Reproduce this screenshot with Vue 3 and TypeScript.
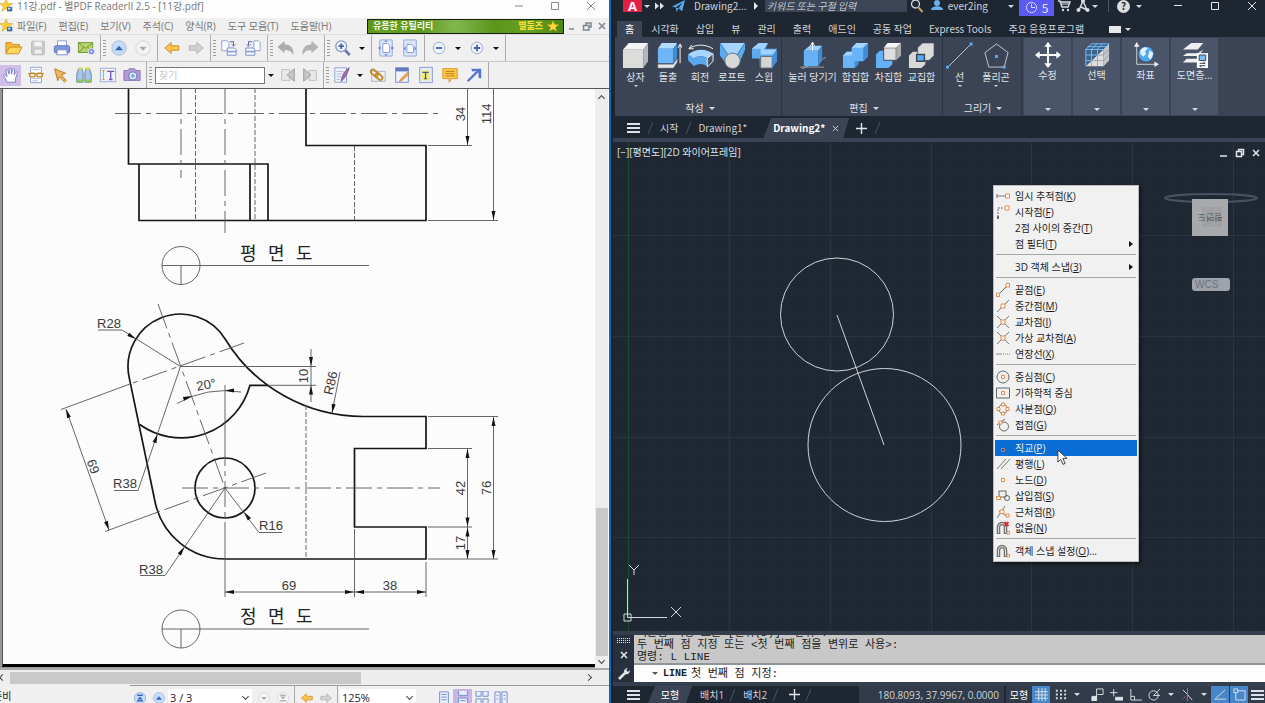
<script setup lang="ts">
interface Tool { kind: 'btn' | 'sep' | 'grip' | 'caret' | 'find'; icon?: string; label?: string; on?: boolean; narrow?: boolean }
interface Cmd { label: string; icon: string; more?: boolean }
interface SnapItem { text?: string; key?: string; tail?: string; icon?: string; sub?: boolean; active?: boolean; sep?: boolean }

const b = (icon: string, label: string, extra: Partial<Tool> = {}): Tool => ({ kind: 'btn', icon, label, ...extra })
const sep: Tool = { kind: 'sep' }
const grip: Tool = { kind: 'grip' }
const caret: Tool = { kind: 'caret' }

const pdfMenus = ['파일(F)', '편집(E)', '보기(V)', '주석(C)', '양식(R)', '도구 모음(T)', '도움말(H)']

const toolRow1: Tool[] = [
  b('folder', '열기'), b('save', '저장'), b('print', '인쇄'), b('mail', '메일'), sep, grip,
  b('up', '이전'), b('down', '다음'), sep, b('back', '뒤로'), b('forward', '앞으로'), sep, grip,
  b('rotl', '왼쪽 회전'), b('rotr', '오른쪽 회전'), sep, grip,
  b('undo', '실행 취소'), b('redo', '다시 실행'), sep, grip,
  b('zoom', '확대'), caret, sep, b('fitpage', '페이지 맞춤'), b('fitwidth', '폭 맞춤'), sep,
  b('minus', '축소'), caret, b('plus', '확대'), caret, sep,
]
const toolRow2: Tool[] = [
  b('hand', '손', { on: true }), b('reader', '읽기'), b('pointer', '선택'), b('binoc', '검색'), b('text', '텍스트'), b('camera', '스냅샷'), sep, grip,
  { kind: 'find' }, caret, b('prev', '이전 찾기', { narrow: true }), b('next', '다음 찾기', { narrow: true }), sep, grip,
  b('pen', '펜'), caret, b('clip', '첨부'), b('note', '노트'), b('textnote', '텍스트 노트'), b('comment', '주석'), b('arrow', '화살표'), sep,
]

const ribbonTabs = ['홈', '시각화', '삽입', '뷰', '관리', '출력', '애드인', '공동 작업', 'Express Tools', '주요 응용프로그램']
const createCmds: Cmd[] = [
  { label: '상자', icon: 'box', more: true }, { label: '돌출', icon: 'extrude' }, { label: '회전', icon: 'revolve' },
  { label: '로프트', icon: 'loft' }, { label: '스윕', icon: 'sweep' },
]
const editCmds: Cmd[] = [
  { label: '눌러 당기기', icon: 'presspull' }, { label: '합집합', icon: 'union' }, { label: '차집합', icon: 'subtract' }, { label: '교집합', icon: 'intersect' },
]
const drawCmds: Cmd[] = [{ label: '선', icon: 'line', more: true }, { label: '폴리곤', icon: 'polygon', more: true }]
const bigPanels: Cmd[] = [
  { label: '수정', icon: 'move' }, { label: '선택', icon: 'select' }, { label: '좌표', icon: 'coord' }, { label: '도면층...', icon: 'layers' },
]
const ribbonPanels = [
  { name: '작성', cls: 'create', cmds: createCmds },
  { name: '편집', cls: 'edit', cmds: editCmds },
  { name: '그리기', cls: 'draw', cmds: drawCmds },
]

const snaps: SnapItem[] = [
  { text: '임시 추적점', key: 'K', icon: 'track' },
  { text: '시작점', key: 'F', icon: 'from' },
  { text: '2점 사이의 중간', key: 'T' },
  { text: '점 필터', key: 'T', sub: true },
  { sep: true },
  { text: '3D 객체 스냅', key: '3', sub: true },
  { sep: true },
  { text: '끝점', key: 'E', icon: 'end' },
  { text: '중간점', key: 'M', icon: 'mid' },
  { text: '교차점', key: 'I', icon: 'cross' },
  { text: '가상 교차점', key: 'A', icon: 'cross' },
  { text: '연장선', key: 'X', icon: 'ext' },
  { sep: true },
  { text: '중심점', key: 'C', icon: 'center' },
  { text: '기하학적 중심', icon: 'geo' },
  { text: '사분점', key: 'Q', icon: 'quad' },
  { text: '접점', key: 'G', icon: 'tan' },
  { sep: true },
  { text: '직교', key: 'P', icon: 'perp', active: true },
  { text: '평행', key: 'L', icon: 'par' },
  { text: '노드', key: 'D', icon: 'node' },
  { text: '삽입점', key: 'S', icon: 'ins' },
  { text: '근처점', key: 'R', icon: 'near' },
  { text: '없음', key: 'N', icon: 'none' },
  { sep: true },
  { text: '객체 스냅 설정', key: 'O', tail: '...', icon: 'magnet' },
]

const majorX = [118, 219, 320, 420, 521, 622]
const majorY = [93, 194, 295, 395]

// Arrowheads of the dimension lines: tip x, tip y, direction in degrees
const heads: [number, number, number][] = [
  [467.5, 145, 90], [493.5, 220, 90], [311, 366, 90], [311, 385.5, -90],
  [66, 409, -109.5], [109, 530, 70.5], [136, 339, 31], [157.5, 434, -71],
  [192, 396, -19], [225, 390.5, 180], [244, 512, -127], [184.5, 547, -55], [332, 413, 101],
  [225, 592, 180], [354, 592, 0], [355, 592, 180], [426, 592, 0],
  [467.5, 449, -90], [467.5, 526.5, 90], [467.5, 527.5, -90], [467.5, 559, 90],
  [493.5, 417, -90], [493.5, 559, 90],
]
</script>

<template>
  <svg class="defs" aria-hidden="true">
    <defs>
      <symbol id="i-folder" viewBox="0 0 20 20"><path d="M1 16V4h6l2 2h7v3" fill="#f3b93a" stroke="#c98a1a" /><path d="M1 16.500 5 9h14l-4 7.500z" fill="#ffd65e" stroke="#c98a1a" /></symbol>
      <symbol id="i-save" viewBox="0 0 20 20"><rect x="3" y="2.500" width="14" height="15" rx="1" fill="#cfcfcf" stroke="#b3b3b3" /><rect x="6" y="3" width="8" height="5" fill="#f4f4f4" /><rect x="5.500" y="11" width="9" height="6" fill="#efefef" stroke="#bbb" /></symbol>
      <symbol id="i-print" viewBox="0 0 20 20"><path d="M5 8V2h10v6" fill="#fff" stroke="#8794c9" /><rect x="1.500" y="7.500" width="17" height="8" rx="2" fill="#7f9ade" stroke="#5069b5" /><path d="M5 12h10l1 5.500H4z" fill="#fff" stroke="#6f84c8" /></symbol>
      <symbol id="i-mail" viewBox="0 0 20 20"><rect x="1.500" y="4" width="16" height="11" fill="#b5d46a" stroke="#6d9433" /><path d="m2 4.500 7.500 6L17 4.500M2 15l5.500-6M17 15l-5-6" fill="none" stroke="#6d9433" /><circle cx="16" cy="14" r="3.500" fill="#6e8ad6" stroke="#eef" /><circle cx="16" cy="14" r="1.200" fill="#eef" /></symbol>
      <symbol id="i-up" viewBox="0 0 20 20"><circle cx="10" cy="10" r="8" fill="#c6ddf8" stroke="#a7b8d6" /><path d="m5.500 12.500 4.500-5 4.500 5z" fill="#3d63bd" /></symbol>
      <symbol id="i-down" viewBox="0 0 20 20"><circle cx="10" cy="10" r="8" fill="#f4f4f4" stroke="#d2d2d2" /><path d="m6 8.500 4 4.500 4-4.500z" fill="#a8a8a8" /></symbol>
      <symbol id="i-first" viewBox="0 0 20 20"><circle cx="10" cy="10" r="8" fill="#c6ddf8" stroke="#8fa4d0" /><path d="M6 5h8v2H6zM6 13h8v2H6z" fill="#3d63bd" /><path d="m6 12 4-4 4 4z" fill="#3d63bd" /></symbol>
      <symbol id="i-last" viewBox="0 0 20 20"><circle cx="10" cy="10" r="8" fill="#f4f4f4" stroke="#d2d2d2" /><path d="M6 5h8v2H6zM6 13h8v2H6z" fill="#b5b5b5" /><path d="m6 8 4 4 4-4z" fill="#b5b5b5" /></symbol>
      <symbol id="i-back" viewBox="0 0 20 20"><path d="m2 10 7-6v3.500h8.500v5H9V16z" fill="#fbc451" stroke="#c88a1e" /></symbol>
      <symbol id="i-forward" viewBox="0 0 20 20"><path d="m18 10-7-6v3.500H2.500v5H11V16z" fill="#d2d2d2" stroke="#b0b0b0" /></symbol>
      <symbol id="i-rotl" viewBox="0 0 20 20"><path d="M2 2h6l2 2v9H2z" fill="#fff" stroke="#8298cf" /><path d="M11 3h4v4m-2-1 2 2 2-2" fill="none" stroke="#4c55a5" /><path d="M8 10h8l2 2v6H8z" fill="#fff" stroke="#6983cf" /><path d="M8 14h10" stroke="#8aa0e0" stroke-width="2" /></symbol>
      <symbol id="i-rotr" viewBox="0 0 20 20"><path d="M11 2h5l2 2v9h-7z" fill="#fff" stroke="#8298cf" /><path d="M9 3H5v4m-2-1 2 2 2-2" fill="none" stroke="#4c55a5" /><path d="M2 10h8l2 2v6H2z" fill="#fff" stroke="#6983cf" /><path d="M2 14h10" stroke="#8aa0e0" stroke-width="2" /></symbol>
      <symbol id="i-undo" viewBox="0 0 20 20"><path d="m1 9 7-6v3.500c7 0 10 3.500 10 10.500-2-4-5-5-10-5V15z" fill="#adadad" stroke="#989898" stroke-width=".5" /></symbol>
      <symbol id="i-redo" viewBox="0 0 20 20"><path d="m19 9-7-6v3.500C5 6.500 2 10 2 17c2-4 5-5 10-5V15z" fill="#b4b4b4" stroke="#9a9a9a" stroke-width=".5" /></symbol>
      <symbol id="i-zoom" viewBox="0 0 20 20"><path d="m12 12 5.500 6" stroke="#6873ad" stroke-width="3" /><circle cx="8" cy="8" r="6" fill="#eef3fd" stroke="#8b9bc9" stroke-width="1.500" /><path d="M8 5v6M5 8h6" stroke="#4560b0" stroke-width="2" /></symbol>
      <symbol id="i-fitpage" viewBox="0 0 20 20"><rect x="3" y="1" width="14" height="18" rx="1" fill="#dbe6fb" stroke="#8fa4d8" /><path d="M6.500 5h5l2.500 2.500V15H6.500z" fill="#fff" stroke="#7e96d2" /><path d="m8 3 2-2 2 2zM8 17l2 2 2-2zM4 8v4l-3-2zm12 0v4l3-2z" fill="#6b7fc4" /></symbol>
      <symbol id="i-fitwidth" viewBox="0 0 20 20"><rect x="3" y="1" width="14" height="18" rx="1" fill="#dbe6fb" stroke="#8fa4d8" /><path d="M6.500 6h5l2.500 2.500V15H6.500z" fill="#fff" stroke="#7e96d2" /><path d="M5 8v5l-2-2.500zm10 0v5l2-2.500z" fill="#6b7fc4" /></symbol>
      <symbol id="i-minus" viewBox="0 0 20 20"><circle cx="10" cy="10" r="6.500" fill="#edf2fd" stroke="#9aa7cc" /><path d="M6.500 10h7" stroke="#4560b0" stroke-width="2" /></symbol>
      <symbol id="i-plus" viewBox="0 0 20 20"><circle cx="10" cy="10" r="6.500" fill="#edf2fd" stroke="#9aa7cc" /><path d="M6.500 10h7M10 6.500v7" stroke="#4560b0" stroke-width="2" /></symbol>
      <symbol id="i-hand" viewBox="0 0 20 20"><path d="M6 18 2 11c-1-2 1-2.500 2-1l1.500 2L4.500 5c0-1.500 1.700-1.500 2 0L8 9V3c0-1.500 2-1.500 2 0l.5 6L12 4c.5-1.500 2-1 2 .5L13.500 10l2-3c1-1 2-.3 1.500 1L15 14v4z" fill="#fff" stroke="#7c7cc4" /></symbol>
      <symbol id="i-reader" viewBox="0 0 20 20"><path d="M4 1.500h12v17H4z" fill="#fff" stroke="#8a9bcb" /><path d="M6 4h8M6 14h8M6 16.500h6" stroke="#a8b6dc" /><path d="M1 8.500h18" stroke="#bd8427" /><rect x="3" y="8" width="6" height="4" rx="1.500" fill="#fff5cc" stroke="#bd8427" stroke-width="1.500" /><rect x="11" y="8" width="6" height="4" rx="1.500" fill="#fff5cc" stroke="#bd8427" stroke-width="1.500" /></symbol>
      <symbol id="i-pointer" viewBox="0 0 20 20"><path d="m4 3 12 5-4.500 2L17 16l-2 2-5.500-6-2 4.500z" fill="#f2b45a" stroke="#b17926" /></symbol>
      <symbol id="i-binoc" viewBox="0 0 20 20"><path d="M4 3h4l1 5v10H2V9zM12 3h4l2 6v9h-7V8z" fill="#a9c8e9" stroke="#637cae" /><path d="M3 15h6v3H2zM11 15h7v3h-7z" fill="#8fc65a" /><rect x="4" y="1.500" width="4" height="3" fill="#cddd4d" /><rect x="12" y="1.500" width="4" height="3" fill="#cddd4d" /></symbol>
      <symbol id="i-text" viewBox="0 0 20 20"><rect x="1.500" y="2.500" width="17" height="15" fill="#edf2fd" stroke="#99a9d6" /><path d="M5 5v10M3.500 5h3M3.500 15h3" stroke="#d79b33" /><path d="M9 6h8M13 6v9M11 15h4" fill="none" stroke="#765bb0" stroke-width="1.500" /></symbol>
      <symbol id="i-camera" viewBox="0 0 20 20"><path d="M1 5h4l2-2h6l1 2h5v11H1z" fill="#b39bd8" stroke="#8870b6" /><circle cx="11" cy="11" r="4.500" fill="#e8e9fb" stroke="#7287c7" stroke-width="1.500" /><circle cx="11" cy="11" r="2" fill="#7fa2df" /></symbol>
      <symbol id="i-prev" viewBox="0 0 20 20"><path d="M3 4h9v12H3z" fill="#e8e8e8" stroke="#bbb" /><path d="M17 3v14l-8-7z" fill="#c6c6c6" stroke="#999" /></symbol>
      <symbol id="i-next" viewBox="0 0 20 20"><path d="M9 5h8v11H9z" fill="#e8e8e8" stroke="#bbb" /><path d="M3 3v14l8-7z" fill="#c6c6c6" stroke="#999" /></symbol>
      <symbol id="i-pen" viewBox="0 0 20 20"><path d="M2 2h13v16H2z" fill="#f2f5fd" stroke="#8a9bcb" /><path d="M4 6h8M4 9h6M4 12h5M4 15h4" stroke="#a8b6dc" /><path d="M18 2c-5 3-8 8-9 15 4-3 7-8 9-15z" fill="#a271b4" stroke="#74528a" /></symbol>
      <symbol id="i-clip" viewBox="0 0 20 20"><path d="M3 6h15v11H3z" fill="#eef1f8" stroke="#a9afc5" /><g fill="none" stroke="#c98526" stroke-width="2"><rect x="-4" y="-2" width="9" height="5" rx="2.500" transform="translate(6 7) rotate(42)" /><rect x="-4" y="-2" width="9" height="5" rx="2.500" transform="translate(11 11) rotate(42)" /></g></symbol>
      <symbol id="i-note" viewBox="0 0 20 20"><rect x="3" y="2" width="14" height="16" fill="#f0f4fd" stroke="#6e82c3" /><path d="M3 2h14v4H3z" fill="#6578c2" /><path d="m8 15 8-8 2 2-8 7-3 1z" fill="#f4a94a" stroke="#b47423" stroke-width=".6" /></symbol>
      <symbol id="i-textnote" viewBox="0 0 20 20"><rect x="3" y="1.500" width="14" height="17" fill="#e4ecfb" stroke="#7f97cf" /><rect x="5" y="5" width="9" height="11" fill="#f8ec6c" /><path d="M6 7h7M9.500 7v7M8 14h3" fill="none" stroke="#3f5b9d" stroke-width="1.500" /></symbol>
      <symbol id="i-comment" viewBox="0 0 20 20"><path d="M2 3h16v11h-6l-3 4v-4H2z" fill="#ffc84b" stroke="#cf9420" /><path d="M5 6h10M5 8.500h10M5 11h10" stroke="#b47a17" /></symbol>
      <symbol id="i-arrow" viewBox="0 0 20 20"><path d="M3 17 14 6" stroke="#5775cc" stroke-width="2.500" /><path d="M7 3h11v11l-3-1V8l-1-2-2-.5-4 .5z" fill="#5775cc" /></symbol>
      <symbol id="i-star" viewBox="0 0 16 16"><path d="m8 1 2 5 5.500.3-4.300 3.400 1.500 5.300L8 12l-4.700 3 1.500-5.300L.5 6.300 6 6z" fill="#ffd83d" stroke="#d7a51c" stroke-width=".6" /></symbol>
      <symbol id="i-appstar" viewBox="0 0 16 16"><path d="m7 0 2 5 5.500.3-4.300 3.400L11.700 14 7 11l-4.700 3 1.500-5.300L0 5.300 5 5z" fill="#ffcf33" stroke="#d49b19" stroke-width=".6" /><rect x="8" y="9" width="6" height="5" fill="#2f62a8" /><rect x="9" y="10" width="3" height="2" fill="#cfe2ff" /></symbol>

      <symbol id="r-box" viewBox="0 0 28 28"><path d="M1 8 7 1h20l-5 7z" fill="#f4f4f4" /><path d="M1 8h21v19H1z" fill="#dcdcda" /><path d="m22 8 5-7v19l-5 7z" fill="#b5b6b8" /></symbol>
      <symbol id="r-extrude" viewBox="0 0 28 28"><path d="M3 7 7 1h16l-4 6z" fill="#b6dcff" /><path d="M3 7h16v15H3z" fill="#6db6f7" /><path d="m19 7 4-6v15l-4 6z" fill="#3f8bd6" /><path d="M3 23h16l4-6v4l-4 6H3z" fill="#e8e8e8" stroke="#78808a" stroke-width=".6" /><path d="M26 22V3m-2 3 2-4 2 4" fill="none" stroke="#fff" /></symbol>
      <symbol id="r-revolve" viewBox="0 0 28 28"><path d="M1 13c7-6 18-7 26-1l-6 5c-4-3-10-3-14 0z" fill="#a7d5ff" /><path d="m1 13 6 4c5-3 9-3 14 0v8c-5-3-9-3-14 0l-6-6z" fill="#5aa9ef" /><path d="m21 17 6-5v8l-6 6z" fill="#4b5361" stroke="#f2f2f2" /><path d="M2 7c7-5 17-5 25 0M2 7l3-4M2 7h5" fill="none" stroke="#f4f4f4" /></symbol>
      <symbol id="r-loft" viewBox="0 0 28 28"><path d="M1 1h26v7l-6 14H7L1 14z" fill="#5aabf0" /><path d="M1 1h26l-8 12H9z" fill="#a5d4ff" /><path d="M1 1 9 13M27 1l-8 12" stroke="#3679bb" /><circle cx="14" cy="19.500" r="8" fill="#d9d9d8" stroke="#686d76" /></symbol>
      <symbol id="r-sweep" viewBox="0 0 28 28"><path d="m1 7 7-6h10l-3 6h12l-4 8v11H9V17H1z" fill="#5daaf1" /><path d="m1 7 7-6h9l-4 7h14l-5 5H10V7z" fill="#a1d2ff" /><path d="M10 15h12v12H10z" fill="#d5d5d4" stroke="#646971" /><path d="m22 15 5-7v12l-5 7z" fill="#458fd6" /></symbol>
      <symbol id="r-presspull" viewBox="0 0 28 28"><path d="M1 26h25M3 28l25-12" stroke="#b2b7bf" stroke-width=".8" /><path d="m5 9 6-5h13l-4 5z" fill="#9acfff" /><path d="M5 9h15v16H5z" fill="#66b2f7" /><path d="m20 9 4-5v15l-4 6z" fill="#3f8cd6" /><path d="M14 9V1m-2 3 2-4 2 4" fill="none" stroke="#fff" /></symbol>
      <symbol id="r-union" viewBox="0 0 28 28"><path d="m1 14 4-4h5V6l5-5h12v14l-5 5h-5v3l-4 4H1z" fill="#69b4f8" /><path d="m1 14 4-4h6l-1 4zM10 6l5-5h12l-5 5z" fill="#a5d5ff" /><path d="m22 6 5-5v14l-5 5zM17 20v3l-4 4v-7z" fill="#3f8dd9" /></symbol>
      <symbol id="r-subtract" viewBox="0 0 28 28"><path d="m1 13 4-4h5v10h8v4l-4 4H1z" fill="#63b1f7" /><path d="M9 6h13v13H9z" fill="#dededc" stroke="#414b58" /><path d="m9 6 4-5h14l-5 5z" fill="#f5f5f3" /><path d="m22 6 5-5v13l-5 5z" fill="#aaaaac" /></symbol>
      <symbol id="r-intersect" viewBox="0 0 28 28"><path d="m1 14 4-4h13v13l-4 4H1z" fill="#d8d8d7" /><path d="m10 6 5-5h12v13l-5 5H10z" fill="#dcdcdb" stroke="#424b58" stroke-width=".7" /><path d="M9 13h8v7H9z" fill="#5ba9ef" stroke="#3b4654" stroke-width="1.500" /></symbol>
      <symbol id="r-line" viewBox="0 0 28 28"><path d="M2 26 26 2" stroke="#c4c9d1" /><path d="M0 24.500h3v3H0zM24.500.5h3v3h-3z" fill="#59adf5" /></symbol>
      <symbol id="r-polygon" viewBox="0 0 28 28"><path d="m14 2 12 9-4 15H6L2 11z" fill="none" stroke="#c4c9d1" /><path d="M12.500 13.500h3v3h-3zM20.500 24.500h3v3h-3z" fill="#59adf5" /></symbol>
      <symbol id="r-move" viewBox="0 0 28 28"><path d="M14 3v22M3 14h22" stroke="#fff" stroke-width="2" /><path d="m14 0 4 5h-8zM14 28l4-5h-8zM0 14l5-4v8zM28 14l-5-4v8z" fill="#fff" /></symbol>
      <symbol id="r-select" viewBox="0 0 28 28"><path d="m2 8 6-6h19v18l-6 6H2z" fill="#3c6288" /><path d="M2 26 21 8v18z" fill="#ddd" /><path d="m21 8 6-6v18l-6 6z" fill="#c4c5c7" /><path d="M2 8h19v18M2 26V8l6-6h19l-6 6M8 8v12M14.500 8v6M2 14h12M2 20h6M8 8l6-6M14 8l6-6M4 5h20" fill="none" stroke="#7cc0f7" /><path d="M8 20v6M14.500 14v12M14 14h7l6-6M8 20h13l6-6" fill="none" stroke="#8e949c" stroke-width=".8" /></symbol>
      <symbol id="r-coord" viewBox="0 0 28 28"><path d="M4 3v21h21" fill="none" stroke="#d5d9df" /><path d="m4 0 3 5H1zM28 24l-5-3v6z" fill="#eee" /><circle cx="14" cy="13" r="8" fill="#4ea7f2" /><path d="M8 9c3-4 6-4 8-2l-3 3 1 3-3 3-3-3zM18 9l4 3-3 7-3-3z" fill="#e4f2ff" /></symbol>
      <symbol id="r-layers" viewBox="0 0 28 28"><path d="m1 8 9-7h13l-6 7zM1 15l4-3h12l6-4-5 7zM1 22l4-4h13v4z" fill="#eee" /><path d="M16 12h12v16H16z" fill="#fff" /><path d="M18.500 14h7v6h-7z" fill="#7abdf5" stroke="#333c4a" /><path d="M19 23h6l-2-1.500M25 25.500h-6l2 1.500" fill="none" stroke="#2e3744" /></symbol>

      <symbol id="s-track" viewBox="0 0 14 14"><path d="M1 7h8M1 5v4" stroke="#777" fill="none" /><path d="M9.500 5h4v4h-4z" fill="#fff" stroke="#e58a4b" /></symbol>
      <symbol id="s-from" viewBox="0 0 14 14"><path d="M2 12V3h6" fill="none" stroke="#666" stroke-dasharray="2 1" /><path d="M9 1h4v4H9z" fill="#fff" stroke="#e58a4b" /><path d="M1 11h2v3H1z" fill="#666" /></symbol>
      <symbol id="s-end" viewBox="0 0 14 14"><path d="m3 11 8-8" stroke="#666" /><path d="M.5 10h3v3.500h-3zM10 .5h3.500V4H10z" fill="#fff" stroke="#e58a4b" /></symbol>
      <symbol id="s-mid" viewBox="0 0 14 14"><path d="M1 13 13 1" stroke="#777" /><path d="M5 5h4v4H5z" fill="#fff" stroke="#e58a4b" /></symbol>
      <symbol id="s-cross" viewBox="0 0 14 14"><path d="M1 13 13 1M1 1l12 12" stroke="#777" /><path d="M5 5h4v4H5z" fill="#fff" stroke="#e58a4b" /></symbol>
      <symbol id="s-ext" viewBox="0 0 14 14"><path d="M0 7h6" stroke="#888" /><path d="M7 7h7" stroke="#888" stroke-dasharray="1 1" /></symbol>
      <symbol id="s-center" viewBox="0 0 14 14"><circle cx="7" cy="7" r="6" fill="none" stroke="#666" /><path d="M5.500 5.500h3v3h-3z" fill="#fff" stroke="#e58a4b" /></symbol>
      <symbol id="s-geo" viewBox="0 0 14 14"><path d="M.5 2h13v10H.5z" fill="none" stroke="#666" /><path d="M5.500 5.500h3v3h-3z" fill="#fff" stroke="#e58a4b" /></symbol>
      <symbol id="s-quad" viewBox="0 0 14 14"><circle cx="7" cy="7" r="4.500" fill="none" stroke="#777" /><path d="M5.500 1h3v3h-3zM5.500 10h3v3h-3zM1 5.500h3v3H1zM10 5.500h3v3h-3z" fill="#fff" stroke="#e58a4b" /></symbol>
      <symbol id="s-tan" viewBox="0 0 14 14"><circle cx="8" cy="8.500" r="4.500" fill="none" stroke="#666" /><path d="M1 7 9 1" stroke="#666" /><path d="M3 3h3v3H3z" fill="#fff" stroke="#e58a4b" /></symbol>
      <symbol id="s-perp" viewBox="0 0 14 14"><path d="M5.500 7.500h3v3h-3z" fill="#0a62c2" stroke="#b8806a" /></symbol>
      <symbol id="s-par" viewBox="0 0 14 14"><path d="M1 12 10 2M5 12l9-10" stroke="#777" /></symbol>
      <symbol id="s-node" viewBox="0 0 14 14"><path d="M5.500 5.500h3v3h-3z" fill="#fff" stroke="#e58a4b" /></symbol>
      <symbol id="s-ins" viewBox="0 0 14 14"><path d="M3 2h7v6H3z" fill="none" stroke="#666" /><circle cx="11" cy="9" r="2.500" fill="none" stroke="#666" /><path d="M.5 7.500h4v3h-4z" fill="#fff" stroke="#e58a4b" /></symbol>
      <symbol id="s-near" viewBox="0 0 14 14"><path d="M1 13 9 1M3 6l9 6" stroke="#777" /><path d="M4 5h4v3.500H4zM10 9h3v3h-3z" fill="#fff" stroke="#e58a4b" /></symbol>
      <symbol id="s-magnet" viewBox="0 0 14 14"><path d="M2.500 13V6a3.500 3.500 0 0 1 7 0v7" fill="none" stroke="#6f6f6f" stroke-width="3.500" /><path d="M2.500 12V6a3.500 3.500 0 0 1 7 0v6" fill="none" stroke="#ddd" stroke-width="1" /><path d="M11 10.500h2.500V13H11z" fill="#fff" stroke="#e58a4b" /></symbol>
      <symbol id="s-none" viewBox="0 0 14 14"><path d="M2.500 13V6a3.500 3.500 0 0 1 7 0v7" fill="none" stroke="#6f6f6f" stroke-width="3.500" /><path d="M2.500 12V6a3.500 3.500 0 0 1 7 0v6" fill="none" stroke="#ddd" stroke-width="1" /><path d="m8.500 1 4 4M12.500 1l-4 4" stroke="#e02b2b" stroke-width="1.800" /><path d="M11 10.500h2.500V13H11z" fill="#fff" stroke="#e58a4b" /></symbol>
    </defs>
  </svg>

  <main class="desk">
    <section class="pdf">
      <header class="pdf-title">
        <svg class="i16"><use href="#i-appstar" /></svg>
        <span class="grow">11강.pdf - 별PDF ReaderII 2.5 - [11강.pdf]</span>
        <button class="win" aria-label="최소화"><svg viewBox="0 0 12 12"><path d="M2 6h8" /></svg></button>
        <button class="win" aria-label="최대화"><svg viewBox="0 0 12 12"><path d="M2.500 2.500h7v7h-7z" /></svg></button>
        <button class="win" aria-label="닫기"><svg viewBox="0 0 12 12"><path d="m2 2 8 8M10 2l-8 8" /></svg></button>
      </header>

      <nav class="pdf-menu">
        <svg class="i16"><use href="#i-appstar" /></svg>
        <button v-for="m in pdfMenus" :key="m">{{ m }}</button>
        <span class="grow"></span>
        <a class="banner" href="#"><span>유용한 유틸리티</span><b>별툴즈</b><svg><use href="#i-star" /></svg></a>
        <button class="mdi" aria-label="창 최소화"><svg viewBox="0 0 10 10"><path d="M2 8h5" /></svg></button>
        <button class="mdi" aria-label="창 복원"><svg viewBox="0 0 10 10"><path d="M4 4V2h5v4H7M1.500 4.500H7V9H1.500z" /></svg></button>
        <button class="mdi" aria-label="창 닫기"><svg viewBox="0 0 10 10"><path d="m2 2 6 6M8 2 2 8" /></svg></button>
      </nav>

      <div v-for="(row, r) in [toolRow1, toolRow2]" :key="r" class="tools" :class="'tools' + (r + 1)">
        <template v-for="(t, i) in row" :key="i">
          <button v-if="t.kind === 'btn'" class="tool" :class="{ on: t.on, narrow: t.narrow }" :aria-label="t.label"><svg><use :href="'#i-' + t.icon" /></svg></button>
          <button v-else-if="t.kind === 'caret'" class="tcaret" aria-label="옵션"><i></i></button>
          <input v-else-if="t.kind === 'find'" class="find" type="text" aria-label="찾기" placeholder="찾기" />
          <span v-else :class="t.kind"></span>
        </template>
      </div>

      <div class="viewer">
        <div class="page">
          <svg class="sheet" viewBox="3 89 592 575" role="img" aria-label="11강 도면">
            <g class="thick">
              <path d="M128.500 88V164H268V220.500M139 164V220.500H426V145.500H306V88M250 164V220.500" />
              <path d="M426 416.500H363A161.300 161.300 0 0 1 225.300 339.200A52.500 52.500 0 0 0 129.100 377.200L155.200 502.500A71.300 71.300 0 0 0 225 559H426V527H354.500V448.500H426Z" />
              <path d="M139.700 424.500A71.300 71.300 0 0 0 250 385.300H268" />
              <circle cx="225" cy="488" r="30" />
            </g>
            <g class="chain">
              <path d="M115 113.500H440M181 88V178M225 88V233M158 304 225 488M244 343 130 384M266 473 158 512M182 488H440M225 440V540" />
            </g>
            <g class="hidden">
              <path d="M195.500 88V220M255 88V220M354.500 146V220M306 405V559" />
            </g>
            <g class="thin">
              <path d="M428 145.500H472M467.500 88V145M493.500 88V220M428 220.500H498" />
              <path d="M61 409.500 130 384M105 531.500 158 512M66 409 109 530" />
              <path d="M181 366.500H316M268 385.300H316M311 349V402" />
              <path d="M98 330H122L180.500 366.500M114 490.500H138L180.500 366.500M282 532.500H259L225 488L165 575.500H140M340 372 332 413" />
              <path d="M177 403.500A97.500 97.500 0 0 1 241 392M225 385V440M225 540V597M225 592H426M354.500 529V597M426 562V597" />
              <path d="M428 416.500H498M428 448.500H472M428 527H472M428 559H498M467.500 449V559M493.500 417V559" />
              <path d="M162 265.500H369M181 265.500V284.500M162 629H369M181 629V648" />
              <circle cx="181" cy="265.500" r="19" /><circle cx="181" cy="629" r="19" />
            </g>
            <path v-for="(h, i) in heads" :key="i" class="head" d="M0 0-9-2V2Z" :transform="`translate(${h[0]} ${h[1]}) rotate(${h[2]})`" />
            <g class="dims">
              <text transform="translate(465 114) rotate(-90)">34</text>
              <text transform="translate(491 114) rotate(-90)">114</text>
              <text transform="translate(308 376) rotate(-90)">10</text>
              <text transform="translate(335 384) rotate(-77)">R86</text>
              <text transform="translate(89 468) rotate(70)">69</text>
              <text transform="translate(207 389) rotate(-10)">20°</text>
              <text x="109" y="328">R28</text>
              <text x="125" y="488">R38</text>
              <text x="271" y="530">R16</text>
              <text x="151" y="574">R38</text>
              <text x="289" y="590">69</text>
              <text x="390" y="590">38</text>
              <text transform="translate(465 488) rotate(-90)">42</text>
              <text transform="translate(465 543) rotate(-90)">17</text>
              <text transform="translate(491 488) rotate(-90)">76</text>
            </g>
            <g class="caption">
              <text x="240 268 296" y="260">평면도</text>
              <text x="240 268 296" y="623">정면도</text>
            </g>
          </svg>
        </div>
        <div class="vbar"><i class="chev up"></i><span class="vtrack"><span class="vthumb"></span></span><i class="chev dn"></i></div>
      </div>
      <div class="hbar"><i class="chev lt"></i><span class="htrack"><span class="hthumb"></span></span><i class="chev rt"></i></div>

      <footer class="pdf-status">
        <span class="ready">준비</span>
        <div class="pager">
          <button class="mini" aria-label="첫 페이지"><svg><use href="#i-first" /></svg></button>
          <button class="mini" aria-label="이전 페이지"><svg><use href="#i-up" /></svg></button>
          <label class="pick pages"><select aria-label="페이지"><option>3 / 3</option></select><i class="chev dn"></i></label>
          <button class="mini" aria-label="다음 페이지"><svg><use href="#i-down" /></svg></button>
          <button class="mini" aria-label="마지막 페이지"><svg><use href="#i-last" /></svg></button>
          <span class="sep"></span>
          <button class="mini" aria-label="뒤로"><svg><use href="#i-back" /></svg></button>
          <button class="mini" aria-label="앞으로"><svg><use href="#i-forward" /></svg></button>
          <span class="sep"></span>
          <label class="pick zoompick"><select aria-label="배율"><option>125%</option></select><i class="chev dn"></i></label>
          <span class="views">
            <button class="mini" aria-label="한 페이지"><svg viewBox="0 0 16 16"><path d="M3 1h10v14H3zM5 4h6M5 7h6M5 10h6" /></svg></button>
            <button class="mini on" aria-label="연속"><svg viewBox="0 0 16 16"><path d="M3-1h10v6H3zM3 8h10v8H3zM5 11h6" /></svg></button>
            <button class="mini" aria-label="두 페이지 연속"><svg viewBox="0 0 16 16"><path d="M1 0h6v6H1zM9 0h6v6H9zM1 9h6v7H1zM9 9h6v7H9z" /></svg></button>
            <button class="mini" aria-label="두 페이지"><svg viewBox="0 0 16 16"><path d="M1 1h6v14H1zM9 1h6v14H9zM3 5h2M11 5h2M3 9h2M11 9h2" /></svg></button>
          </span>
        </div>
      </footer>
    </section>

    <section class="cad">
      <header class="cad-title">
        <span class="alogo">A</span>
        <i class="tri"></i>
        <svg class="ff" viewBox="0 0 10 10"><path d="M0 1.500 4 5 0 8.500zM5 1.500 9 5 5 8.500z" fill="#e3e6ea" /></svg>
        <svg class="plane" viewBox="0 0 14 14"><path d="M0 7 14 0l-3 12-4-3-2 4-1-5z" fill="#56a9ee" /><path d="m4 8 7-5-4 6z" fill="#1d2631" /></svg>
        <span class="docname">Drawing2...</span>
        <svg class="play" viewBox="0 0 6 8"><path d="M1 0v8l4-4z" fill="#e3e6ea" /></svg>
        <input class="search" type="search" aria-label="검색" placeholder="키워드 또는 구절 입력" />
        <button class="ic" aria-label="검색"><svg viewBox="0 0 14 14"><circle cx="5.500" cy="5" r="4" fill="none" stroke="#d5d9de" stroke-width="1.300" /><path d="m8.500 8.500 4 4.500" stroke="#d09b62" stroke-width="2" /></svg></button>
        <button class="user"><svg viewBox="0 0 12 12"><circle cx="6" cy="3" r="3" fill="#68b0ee" /><path d="M0 10c0-5 12-5 12 0z" fill="#68b0ee" /></svg>ever2ing</button>
        <i class="tri"></i>
        <span class="trial"><svg viewBox="0 0 14 14"><circle cx="7" cy="7" r="5.500" fill="none" stroke="#dfe0ff" /><path d="M7 3v4h4" fill="none" stroke="#dfe0ff" /></svg>5</span>
        <button class="ic" aria-label="장바구니"><svg viewBox="0 0 14 14"><path d="M1 2h2l2 6h6l2-5H4" fill="none" stroke="#d8dbe0" stroke-width="1.500" /><path d="M4 5h8" stroke="#d8dbe0" /><circle cx="6" cy="11" r="1.200" fill="#d8dbe0" /><circle cx="11" cy="11" r="1.200" fill="#d8dbe0" /></svg></button>
        <button class="ic apps" aria-label="앱"><svg viewBox="0 0 14 14"><path d="M3 11 7 2l4 9M5 8l6 3" fill="none" stroke="#d8dbe0" stroke-width="1.500" /><circle cx="2.500" cy="11" r="2" fill="#d8dbe0" /><circle cx="7" cy="2" r="2" fill="#d8dbe0" /><circle cx="11.500" cy="11" r="2" fill="#d8dbe0" /></svg></button>
        <i class="tri"></i>
        <span class="bar"></span>
        <button class="help" aria-label="도움말">?</button>
        <i class="tri"></i>
        <span class="grow"></span>
        <button class="cwin" aria-label="최소화"><svg viewBox="0 0 12 12"><path d="M2 5.500h8" /></svg></button>
        <button class="cwin" aria-label="최대화"><svg viewBox="0 0 12 12"><path d="M2.500 2.500h7v7h-7z" /></svg></button>
        <button class="cwin" aria-label="닫기"><svg viewBox="0 0 12 12"><path d="m2 2 8 8M10 2l-8 8" /></svg></button>
      </header>

      <nav class="ribbon-tabs">
        <button v-for="(t, i) in ribbonTabs" :key="t" :class="{ on: i === 0 }">{{ t }}</button>
        <span class="collapse"><i class="tri"></i></span><i class="tri"></i>
      </nav>

      <div class="ribbon">
        <section v-for="p in ribbonPanels" :key="p.name" class="panel" :class="p.cls">
          <div class="cmds">
            <button v-for="c in p.cmds" :key="c.label" class="cmd"><svg><use :href="'#r-' + c.icon" /></svg><span>{{ c.label }}</span><i v-if="c.more" class="tri"></i></button>
          </div>
          <button class="pname">{{ p.name }}<i class="tri"></i></button>
        </section>
        <button v-for="c in bigPanels" :key="c.label" class="bigpanel"><svg><use :href="'#r-' + c.icon" /></svg><span>{{ c.label }}</span><i class="tri"></i></button>
      </div>

      <nav class="files">
        <button class="burger" aria-label="메뉴"><i></i><i></i><i></i></button>
        <i class="slash"></i><button class="ftab home">시작</button><i class="slash"></i>
        <button class="ftab">Drawing1*</button>
        <button class="ftab active">Drawing2*<svg viewBox="0 0 8 8"><path d="m1 1 6 6M7 1 1 7" /></svg></button>
        <button class="add" aria-label="새 도면"><svg viewBox="0 0 12 12"><path d="M6 0v12M0 6h12" /></svg></button>
        <i class="slash"></i>
      </nav>

      <div class="canvas">
        <svg class="model" aria-hidden="true">
          <defs>
            <pattern id="minor" x="17" y="13" width="20" height="20" patternUnits="userSpaceOnUse"><path d="M.5 0V20M0 .5H20" stroke="#202a36" fill="none" /></pattern>
          </defs>
          <rect width="100%" height="100%" fill="url(#minor)" />
          <line v-for="x in majorX" :key="'x' + x" class="major" :x1="x + .5" :x2="x + .5" y1="0" y2="100%" />
          <line v-for="y in majorY" :key="'y' + y" class="major" x1="0" x2="100%" :y1="y + .5" :y2="y + .5" />
          <line x1="17.500" x2="17.500" y1="0" y2="100%" stroke="#1c4a2c" />
          <g class="geom">
            <circle cx="226" cy="172.500" r="56.500" />
            <circle cx="273.500" cy="303" r="76.500" />
            <path d="M226 173 273 303" />
          </g>
          <g class="ucs">
            <path d="M16.500 437V475.500H56M13 472h7v7h-7zM18 423l5 5 5-5M23 428v5M60 465l10 10M70 465l-10 10" />
          </g>
          <g>
            <ellipse cx="600" cy="56" rx="46" ry="4" fill="none" stroke="#47515f" stroke-width="2" />
            <rect x="581" y="57" width="36" height="37" fill="#a7a9ac" />
            <rect x="591" y="65" width="20" height="20" fill="#9fa1a4" />
            <text class="cube" transform="translate(599 72) rotate(180)">평면도</text>
            <rect x="581" y="136" width="38" height="13" rx="3" fill="#9da2ab" />
            <text class="wcs" x="584" y="146">WCS</text>
          </g>
        </svg>
        <div class="viewlabel">[−][평면도][2D 와이어프레임]</div>
        <div class="viewwin">
          <button aria-label="최소화"><svg viewBox="0 0 10 10"><path d="M1 8h7" /></svg></button>
          <button aria-label="복원"><svg viewBox="0 0 10 10"><path d="M3.500 3V1.500h5v5H7M1.500 3.500h5v5h-5z" /></svg></button>
          <button aria-label="닫기"><svg viewBox="0 0 10 10"><path d="m2 2 6 6M8 2 2 8" /></svg></button>
        </div>

        <div class="snapmenu" role="menu">
          <template v-for="(s, i) in snaps" :key="i">
            <hr v-if="s.sep" />
            <button v-else role="menuitem" :class="{ active: s.active }">
              <span class="sicon"><svg v-if="s.icon"><use :href="'#s-' + s.icon" /></svg></span>
              <span class="stext">{{ s.text }}<template v-if="s.key">(<u>{{ s.key }}</u>)</template>{{ s.tail }}</span>
              <i v-if="s.sub" class="sub"></i>
            </button>
          </template>
        </div>
        <svg class="mouse" viewBox="0 0 12 18"><path d="M1 1v13l3-3 2.500 5.500 2.300-1L6.500 10H11z" fill="#fff" stroke="#333" /></svg>
      </div>

      <div class="command">
        <div class="handle">
          <span class="dots"></span>
          <svg viewBox="0 0 8 8"><path d="m1 1 6 6M7 1 1 7" stroke="#e6e8eb" stroke-width="1.500" /></svg>
          <svg viewBox="0 0 14 14"><path d="m2 12 6-6" stroke="#e6e8eb" stroke-width="2.500" /><path d="M7 5c0-3 2-4 4-4L9 3l2 2 2-2c0 3-2 5-5 4z" fill="#e6e8eb" /></svg>
        </div>
        <div class="cmdbody">
          <div class="history"><p>기준점 지정 또는 [변위(D)] &lt;변위&gt;:</p><p>두 번째 점 지정 또는 &lt;첫 번째 점을 변위로 사용&gt;:</p><p>명령: L LINE</p></div>
          <div class="prompt"><i class="tri"></i><b>LINE</b><label for="cmdline">첫 번째 점 지정:</label><input id="cmdline" type="text" /></div>
        </div>
      </div>

      <footer class="cad-status">
        <button class="burger" aria-label="배치 메뉴"><i></i><i></i><i></i></button>
        <button class="ltab active">모형</button>
        <button class="ltab">배치1</button><i class="slash"></i>
        <button class="ltab">배치2</button><i class="slash"></i>
        <button class="add" aria-label="새 배치"><svg viewBox="0 0 12 12"><path d="M6 0v12M0 6h12" /></svg></button>
        <i class="slash"></i>
        <span class="grow"></span>
        <span class="coords">180.8093, 37.9967, 0.0000</span>
        <div class="toggles">
          <button class="modelbtn">모형</button>
          <button class="tg on" aria-label="그리드"><svg viewBox="0 0 14 14"><path d="M4 0v14M7.500 0v14M11 0v14M0 4h14M0 7.500h14M0 11h14" /></svg></button>
          <button class="tg" aria-label="스냅"><svg viewBox="0 0 14 14"><path d="M2 3h11M2 7h11M2 11h11" stroke-dasharray="2 2.500" stroke-width="2" /></svg></button>
          <i class="tri"></i>
          <button class="tg gap" aria-label="추정 구속"><svg viewBox="0 0 14 14"><path d="M6 10V1h7v6H7" /><path d="M1 9h5v5H1z" fill="#dfe2e6" /></svg></button>
          <button class="tg" aria-label="동적 입력"><svg viewBox="0 0 14 14"><path d="M4 1v8M0 5h8" /><path d="M6 10h8v3H6z" fill="#dfe2e6" /></svg></button>
          <button class="tg" aria-label="직교"><svg viewBox="0 0 14 14"><path d="M2 1v12h12M2 9h4v4" /></svg></button>
          <button class="tg" aria-label="극좌표"><svg viewBox="0 0 14 14"><circle cx="6" cy="8" r="5" /><path d="M13 1 6 8h7" /></svg></button>
          <i class="tri"></i>
          <button class="tg" aria-label="등각투영"><svg viewBox="0 0 14 14"><path d="m2 2 5 5 5 6" /><path d="M7 0v14" stroke="#5f9a62" /><path d="m2 12 4-4" stroke="#b04d56" /></svg></button>
          <i class="tri"></i>
          <button class="tg on" aria-label="객체 스냅 추적"><svg viewBox="0 0 14 14"><path d="M1 12 12 2M1 12h12" /></svg></button>
          <button class="tg on" aria-label="객체 스냅"><svg viewBox="0 0 14 14"><path d="M1 1h4v4H1zM5 3h8v10H3V5" /></svg></button>
          <button class="burger" aria-label="사용자화"><i></i><i></i><i></i></button>
        </div>
      </footer>
    </section>
  </main>
</template>

<style>
html, body, #app { height: 100%; margin: 0; }
body { overflow: hidden; }
</style>

<style scoped>
* { box-sizing: border-box; }
.defs { position: absolute; width: 0; height: 0; }
button, input, select { font: inherit; color: inherit; border: 0; padding: 0; margin: 0; background: none; border-radius: 0; outline: 0; }
button { white-space: nowrap; display: flex; align-items: center; justify-content: center; }
svg { display: block; flex: none; }
.grow { flex: 1; min-width: 0; }
.desk { display: grid; grid-template-columns: 611fr 654fr; height: 100vh; overflow: hidden; font: 10px/14px "Open Sans", "Noto Sans CJK KR", sans-serif; }

/* PDF window */
.pdf { display: flex; flex-direction: column; min-width: 0; min-height: 0; overflow: hidden; background: #f0f0f0; border-right: 2px solid #0b6cae; color: #777; }
.pdf-title { display: flex; align-items: center; height: 18px; padding: 0 0 6px; background: #fdfdfd; line-height: 12px; white-space: nowrap; flex: none; }
.i16 { width: 14px; height: 14px; margin-right: 3px; }
.win { width: 36px; height: 12px; }
.win svg { width: 12px; height: 12px; fill: none; stroke: #8b8b8b; }
.pdf-menu { display: flex; align-items: center; height: 17px; border-bottom: 1px solid #dcdcdc; flex: none; white-space: nowrap; }
.pdf-menu > button { margin-right: 12px; height: 14px; }
.pdf-menu > .mdi { width: 15px; margin: 0; }
.mdi svg { width: 10px; height: 10px; fill: none; stroke: #7c8594; stroke-width: 1.5; }
.banner { display: flex; align-items: center; width: 197px; height: 15px; padding: 0 4px 0 5px; border: 1px solid #17210c; background: radial-gradient(circle at 45% 50%, #83b850, #5b961c 35%, #65a01f 70%, #4c8615); color: #f6f8ea; text-decoration: none; font-weight: 700; font-size: 9px; flex: none; }
.banner span { flex: 1; }
.banner b { color: #f4dc39; }
.banner svg { width: 12px; height: 12px; margin-left: 4px; }
.tools { display: flex; align-items: center; height: 27px; padding-left: 2px; border-bottom: 1px solid #c9c9c9; flex: none; }
.tools2 { border-bottom: 1px solid #555; padding-left: 0; }
.tool { width: 24px; height: 24px; flex: none; }
.tool.narrow { width: 22px; }
.tool.on { width: 21px; height: 21px; margin-right: 3px; background: #cfbee8; }
.tool svg { width: 18px; height: 18px; }
.tcaret { width: 14px; height: 20px; flex: none; }
.tools2 .tcaret { width: 12px; }
.tcaret i { border: 3px solid transparent; border-top: 3px solid #111; border-bottom: 0; }
.sep { width: 1px; height: 26px; margin: 0 2px; background: #aaa; flex: none; }
.grip { width: 3px; height: 16px; margin-right: 1px; background: repeating-linear-gradient(#9b9b9b 0 1px, transparent 1px 3px); flex: none; }
.find { width: 110px; height: 17px; margin-left: 2px; padding: 0 3px; background: #fff; border: 1px solid #777; flex: none; }
.find::placeholder { color: #c9c9c9; opacity: 1; }

.viewer { flex: 1; display: flex; min-height: 0; background: #999; }
.page { flex: 1; min-width: 0; overflow: hidden; background: #fcfcfc; border-left: 1px solid #555; border-bottom: 3px solid #000; margin: 0 0 1px 2px; }
.sheet { width: 592px; height: 575px; }
.sheet path, .sheet circle { fill: none; }
.thick { stroke: #161616; stroke-width: 1.7; }
.thin { stroke: #555; stroke-width: .9; }
.chain { stroke: #555; stroke-width: .9; stroke-dasharray: 26 5 5 5; }
.hidden { stroke: #666; stroke-dasharray: 5 2; }
.sheet .head { fill: #111; }
.dims text { font: 13px "Liberation Sans", Arial, sans-serif; fill: #3a3a3a; text-anchor: middle; }
.caption text { font: 18px "Noto Sans CJK KR", sans-serif; fill: #222; }
.vbar { display: flex; flex-direction: column; align-items: center; width: 14px; background: #ededed; border-right: 1px solid #fafafa; flex: none; }
.chev { display: block; width: 5px; height: 5px; border: solid #444; border-width: 1px 1px 0 0; flex: none; }
.chev.up { transform: rotate(-45deg); margin: 7px 0; }
.chev.dn { transform: rotate(135deg); margin: 2px 0 5px; }
.chev.lt { transform: rotate(-135deg); }
.chev.rt { transform: rotate(45deg); }
.vtrack { flex: 1; width: 12px; display: flex; flex-direction: column; justify-content: flex-end; }
.vthumb { height: 27%; background: #c9c9c9; }
.hbar { display: flex; align-items: center; height: 17px; padding: 0 18px 0 0; background: #ededed; flex: none; border-top: 2px solid #aaa; }
.htrack { flex: 1; height: 12px; margin: 0 0 0 5px; }
.hthumb { display: block; width: 61%; height: 12px; background: #c9c9c9; }
.pdf-status { display: flex; height: 18px; flex: none; overflow: hidden; color: #222; }
.ready { width: 130px; margin-top: 4px; text-indent: -7px; flex: none; overflow: hidden; }
.pager { flex: 1; display: flex; align-items: center; height: 24px; border-top: 1px solid #999; flex-shrink: 0; }
.mini { width: 19px; height: 18px; flex: none; }
.mini svg { width: 14px; height: 14px; }
.pick { display: flex; align-items: center; height: 18px; background: #fff; padding: 0 4px 0 2px; font-size: 11px; margin-right: 2px; flex: none; }
.pick select { flex: 1; min-width: 0; appearance: none; }
.pages { width: 84px; }
.zoompick { width: 76px; }
.views { display: flex; margin-left: 16px; }
.views svg { fill: #e7eefc; stroke: #6c86c9; }
.views .on { background: #c9b5e4; }

/* CAD window */
.cad { display: flex; flex-direction: column; min-width: 0; min-height: 0; overflow: hidden; background: #1d2631; color: #cfd4db; border-left: 2px solid #10202f; }
.tri { display: block; border: 3px solid transparent; border-top: 3px solid #d5d9df; border-bottom: 0; flex: none; }
.cad-title { display: flex; align-items: center; height: 21px; padding: 0 7px 9px 10px; flex: none; white-space: nowrap; line-height: 12px; }
.cad-title, .ribbon-tabs, .files { font-family: "Noto Sans CJK KR", sans-serif; }
.alogo { width: 19px; height: 12px; margin: 0 2px 0 0; background: #e51f43; color: #fff; font: 700 13px/12px "Open Sans", sans-serif; text-align: center; flex: none; }
.ff { width: 10px; height: 10px; margin: 0 7px 0 5px; }
.plane { width: 13px; height: 13px; }
.docname { width: 62px; margin-left: 9px; }
.play { width: 6px; height: 8px; margin: 0 6px 0 1px; }
.search { width: 142px; height: 12px; padding: 0 2px; background: #3b4555; font-style: italic; flex: none; appearance: none; }
.search::placeholder { color: #c3c8d0; opacity: 1; }
.ic { width: 20px; height: 14px; flex: none; }
.ic svg { width: 14px; height: 14px; }
.user { width: 87px; justify-content: flex-start; gap: 5px; padding-left: 4px; }
.user svg { width: 12px; height: 12px; }
.cad-title > .tri { margin-right: 5px; }
.trial { display: flex; align-items: center; justify-content: center; gap: 4px; width: 35px; height: 16px; margin-bottom: -3px; background: #5a5bf2; color: #e8e8ff; font-size: 12px; flex: none; }
.trial svg { width: 13px; height: 13px; }
.cad-title > .alogo + .tri { margin-right: 0; }
.cad-title > .apps { width: 18px; }
.bar { width: 1px; height: 12px; margin: 0 8px 0 5px; background: #4a5462; }
.help { width: 13px; height: 13px; margin-right: 6px; border-radius: 7px; background: #dadcdf; color: #222b36; font-weight: 700; flex: none; }
.cwin { width: 12px; height: 12px; margin-left: 25px; flex: none; }
.cwin svg { width: 12px; height: 12px; fill: none; stroke: #e5e7ea; }
.ribbon-tabs { display: flex; align-items: center; height: 16px; padding-left: 4px; flex: none; }
.ribbon-tabs button { height: 16px; padding: 0 9px 0 8px; }
.ribbon-tabs .on { background: #3b4454; color: #fff; padding-right: 8px; margin-right: 1px; }
.collapse { display: flex; width: 12px; height: 7px; margin: 0 4px 0 16px; background: #e6e8ea; justify-content: center; align-items: center; }
.collapse .tri { border-width: 0 2px 3px; border-color: transparent transparent #222; }
.ribbon { display: flex; height: 79px; margin-left: 2px; background: #3b4454; flex: none; gap: 2px; color: #e1e4e9; }
.panel { display: flex; flex-direction: column; border-right: 1px solid #2b3442; flex: none; }
.cmds { flex: 1; display: flex; padding-top: 5px; }
.cmd { width: 32px; flex-direction: column; justify-content: flex-start; }
.cmd svg { width: 27px; height: 27px; }
.cmd span { margin-top: 1px; }
.cmd .tri { margin-top: 1px; border-width: 2px 2px 0; }
.create { width: 167px; padding-left: 4px; }
.create .cmd:first-child { width: 33px; }
.edit { width: 159px; padding-left: 2px; }
.edit .cmd { width: 33px; }
.edit .cmd:first-child { width: 53px; }
.draw { width: 77px; }
.draw .cmd { width: 44px; }
.draw .cmd:first-child { width: 29px; }
.pname { gap: 5px; height: 16px; }
.bigpanel { flex-direction: column; justify-content: flex-start; width: 47px; height: 77px; padding: 4px 0 4px; margin: 1px 0 0; background: #4a556a; flex: none; }
.bigpanel svg { width: 26px; height: 26px; }
.bigpanel .tri { margin-top: auto; }
.files { display: flex; align-items: center; height: 26px; padding: 2px 0 0 14px; border-bottom: 4px solid #3b4454; background: #1d2631; flex: none; }
.burger { flex-direction: column; gap: 2px; width: 13px; height: 12px; flex: none; }
.burger i { width: 13px; height: 2px; background: #dfe2e6; }
.slash { width: 1px; height: 12px; margin: 0 10px; background: #4a5462; transform: skewX(-22deg); flex: none; }
.ftab { height: 20px; }
.files .slash { margin-right: 9px; }
.active { color: #fff; }
.ftab.active { width: 86px; gap: 7px; margin-left: 16px; font-weight: 600; background: #3b4454; clip-path: polygon(8px 0, 100% 0, calc(100% - 6px) 100%, 0 100%); }
.ftab svg { width: 7px; height: 7px; stroke: #d7dadf; }
.add { width: 12px; height: 12px; margin-left: 6px; flex: none; }
.add svg { width: 11px; height: 11px; stroke: #e5e7ea; stroke-width: 1.5; }

.canvas { position: relative; flex: 1; min-height: 0; background: #1e2732; margin-left: -2px; }
.model { position: absolute; width: 100%; height: 100%; overflow: hidden; }
.major { stroke: #2a3540; }
.geom { fill: none; stroke: #cfd3d8; }
.ucs { fill: none; stroke: #d3d7dc; }
.cube { font-size: 9px; fill: #55595f; text-anchor: middle; }
.wcs { font: 10px "Liberation Sans", sans-serif; fill: #69717c; }
.viewlabel { position: absolute; left: 6px; top: 3px; color: #dfe2e6; }
.viewwin { position: absolute; right: 4px; top: 6px; display: flex; gap: 6px; }
.viewwin svg { width: 10px; height: 10px; fill: none; stroke: #e6e8ea; stroke-width: 1.5; }
.snapmenu { position: absolute; left: 382px; top: 43px; width: 146px; padding: 2px 1px; background: #f1f1f1; border: 1px solid #bdbdbd; box-shadow: 2px 2px 3px #0007; color: #1c1c1c; }
.snapmenu button { display: flex; width: 100%; height: 16px; justify-content: flex-start; }
.snapmenu hr { height: 1px; margin: 2px 1px 4px; border: 0; background: #a5a5a5; }
.snapmenu .active { background: #0a6cd5; color: #f1ece2; }
.sicon { width: 20px; padding-left: 1px; }
.sicon svg { width: 14px; height: 14px; }
.stext { flex: 1; text-align: left; }
.sub { border: 3px solid transparent; border-left: 4px solid #111; border-right: 0; margin-right: 4px; }
.mouse { position: absolute; left: 446px; top: 307px; width: 11px; height: 17px; }

.command { display: flex; height: 55px; padding: 4px 0; background: #343e4c; flex: none; color: #222; font: 11px/12px "Liberation Mono", "Noto Sans CJK KR", monospace; }
.handle { display: flex; flex-direction: column; align-items: center; justify-content: space-between; width: 21px; padding: 3px 0 1px; background: #27303c; flex: none; }
.dots { width: 13px; height: 5px; background: repeating-linear-gradient(transparent 0 1px, #27303c 1px 2px), repeating-linear-gradient(90deg, #dfe2e6 0 1px, transparent 1px 2px); }
.handle svg:nth-child(2) { width: 8px; height: 8px; }
.handle svg:nth-child(3) { width: 14px; height: 14px; }
.cmdbody { flex: 1; min-width: 0; display: flex; flex-direction: column; }
.history { flex: 1; min-height: 0; display: flex; flex-direction: column; justify-content: flex-end; overflow: hidden; padding: 0 3px; background: #c8c8c8; border-bottom: 2px solid #8e949c; }
.history p { margin: 0; white-space: pre; flex: none; }
.prompt { display: flex; align-items: center; height: 17px; padding-left: 18px; gap: 5px; background: #fdfdfd; flex: none; }
.prompt .tri { border-top-color: #555; }
.prompt b { font-size: 10px; margin-right: -1px; }
.prompt input { flex: 1; min-width: 0; }

.cad-status { display: flex; align-items: center; height: 17px; padding-left: 14px; flex: none; white-space: nowrap; }
.ltab { height: 17px; padding-left: 2px; }
.ltab.active { width: 44px; margin: 0 6px 0 8px; padding: 0; background: #3b4454; clip-path: polygon(7px 0, 100% 0, calc(100% - 6px) 100%, 0 100%); }
.cad-status .slash { margin: 0 8px; }
.cad-status .add { margin-left: 4px; }
.coords { display: flex; align-items: center; justify-content: flex-end; width: 145px; height: 17px; padding-right: 5px; background: #313b49; }
.toggles { display: flex; align-items: center; height: 17px; margin-left: 2px; background: #313b49; flex: none; }
.modelbtn { width: 26px; color: #fff; }
.tg { width: 19px; height: 17px; flex: none; }
.tg svg { width: 13px; height: 13px; fill: none; stroke: #dfe2e6; }
.tg.on { background: #4787c9; width: 18px; margin-right: 1px; }
.tg.gap { margin-left: 4px; }
.toggles > .tri { margin: 0 4px; }
.toggles .burger { margin: 0 1px 0 2px; }
</style>
